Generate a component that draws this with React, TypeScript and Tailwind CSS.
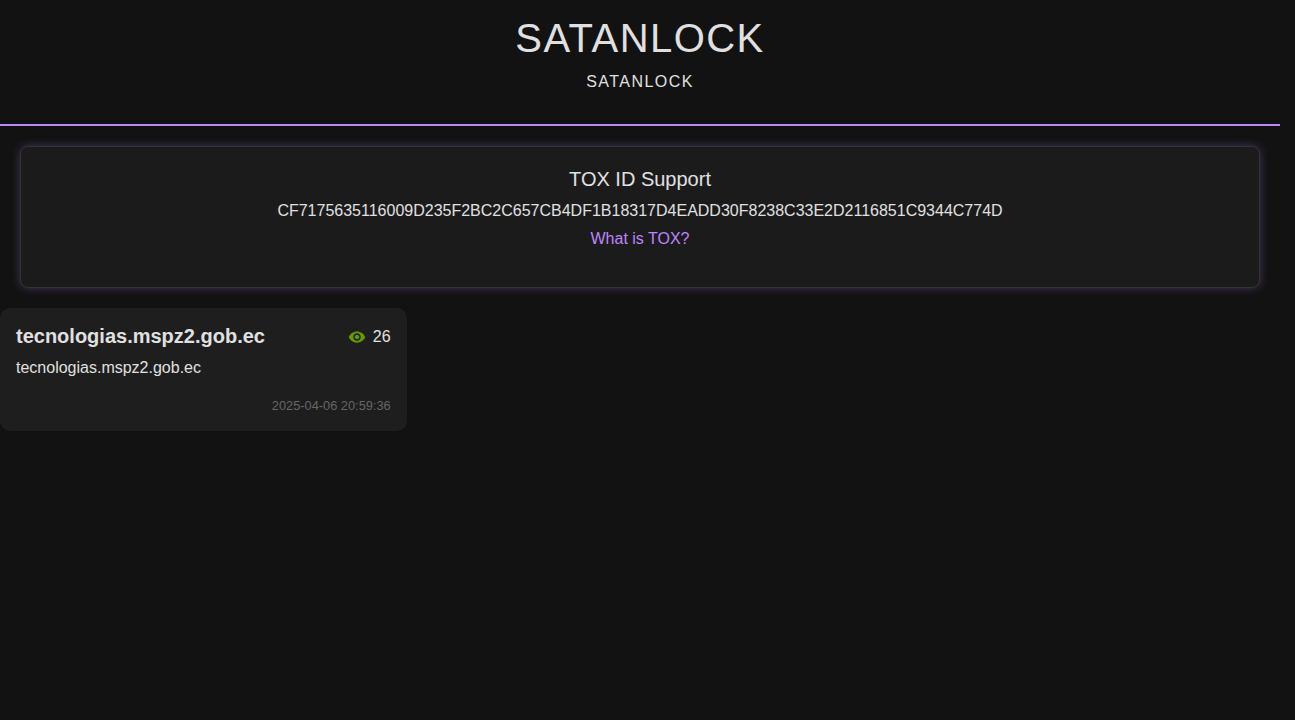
import { MdVisibility } from "react-icons/md";

const toxId =
  "CF7175635116009D235F2BC2C657CB4DF1B18317D4EADD30F8238C33E2D2116851C9344C774D";

const posts = [
  {
    id: 1,
    title: "tecnologias.mspz2.gob.ec",
    desc: "tecnologias.mspz2.gob.ec",
    views: 26,
    date: "2025-04-06 20:59:36",
  },
];

const Header = () => {
  return (
    <header className="border-b-2 border-[#bb86fc] pt-2 pb-[30px] text-center tracking-[0.09rem]">
      <h1 className="text-[40px] leading-[60px]">SATANLOCK</h1>
      <p className="mt-0.5 text-base">SATANLOCK</p>
    </header>
  );
};

const Support = () => {
  return (
    <section className="m-5 rounded-lg border border-[#333] bg-[#1b1b1b] px-5 pt-5 pb-[38px] text-center shadow-[0_0_10px_rgba(187,134,252,0.3)]">
      <h2 className="mb-2.5 text-xl leading-6">TOX ID Support</h2>
      <p className="mb-2 text-base leading-5 break-all">{toxId}</p>
      <a href="#tox" className="block text-base leading-5 text-[#bb86fc]">
        What is TOX?
      </a>
    </section>
  );
};

const Posts = () => {
  return (
    <main className="grid grid-cols-3 gap-[30px]">
      {posts.map((post) => (
        <article
          key={post.id}
          className="rounded-[10px] bg-[#1e1e1e] px-4 pt-4 pb-[15px]"
        >
          <div className="flex items-start justify-between">
            <h2 className="text-xl leading-6 font-bold">{post.title}</h2>
            <span className="flex items-center gap-[7px] leading-[26px]">
              <MdVisibility className="size-[18px] text-[#669900]" />
              {post.views}
            </span>
          </div>
          <p className="mt-1.5 leading-6">{post.desc}</p>
          <time className="mt-4 block text-right text-[0.8rem] leading-5 text-[#666]">
            {post.date}
          </time>
        </article>
      ))}
    </main>
  );
};

export default function App() {
  return (
    <div className="min-h-screen bg-[#121212] pr-[15px] font-['Liberation_Sans',Arial,sans-serif] text-base text-[#e0e0e0]">
      <Header />
      <Support />
      <Posts />
    </div>
  );
}
